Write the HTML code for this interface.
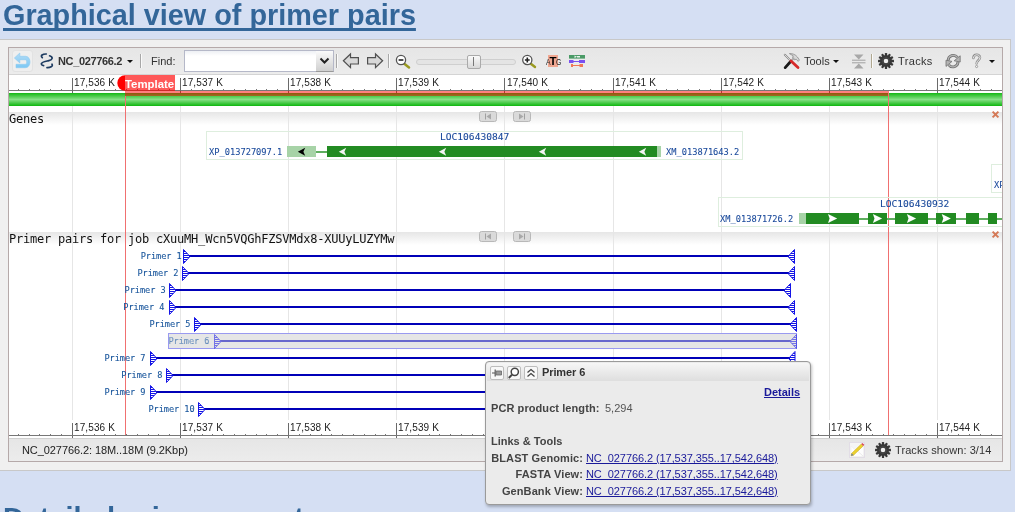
<!DOCTYPE html>
<html><head><meta charset="utf-8">
<style>
html,body{margin:0;padding:0}
body{width:1015px;height:512px;overflow:hidden;background:#d5dff3;position:relative;font-family:"Liberation Sans",sans-serif;font-size:11px;color:#222}
.abs{position:absolute}
h2{position:absolute;margin:0;left:3px;top:-1px;font:bold 28.8px/33px "Liberation Sans",sans-serif;color:#336699;text-decoration:underline;text-decoration-thickness:3px;text-underline-offset:3px;text-decoration-skip-ink:none;white-space:nowrap}
#h2b{top:502px}
#outer{left:0;top:39px;width:1011px;height:432px;background:#f0f0f0;border-top:1px solid #c8c8c8;border-bottom:1px solid #c8c8c8;border-right:1px solid #c8c8c8;box-sizing:border-box}
#panel{left:8px;top:47px;width:995px;height:415px;box-sizing:border-box;border:1px solid #b5a9a9;background:#fff}
#tb{left:9px;top:48px;width:993px;height:27px;box-sizing:border-box;border-bottom:1px solid #d4d4d4;background:linear-gradient(#e6e6e6,#ececec)}
#sb{left:9px;top:438px;width:993px;height:23px;background:linear-gradient(#e6e6e6,#ececec);border-top:1px solid #d0d0d0;box-sizing:border-box}
.mono{font-family:"DejaVu Sans Mono","Liberation Mono",monospace}
.sep{top:54px;width:1px;height:14px;background:#a8a8a8;box-shadow:1px 0 0 #fafafa}
.rl{font:10px/12px "Liberation Sans",sans-serif;color:#222;white-space:nowrap;letter-spacing:0.12px}
.tl{font-size:12px;line-height:14px;letter-spacing:-0.22px;color:#111;white-space:nowrap}
.gl{font-size:8.6px;line-height:11px;color:#18489a;white-space:nowrap;transform-origin:0 0;transform:scaleX(1.012);-webkit-text-stroke:0.08px #18489a}
.loc{transform:scaleX(1.116)}
.pl{font-size:8.6px;line-height:11px;color:#14529a;white-space:nowrap;letter-spacing:-0.05px;-webkit-text-stroke:0.08px #14529a}
.tbtn{top:366px;width:14px;height:14px;box-sizing:border-box;border:1px solid #bdbdbd;border-radius:2px;background:#f8f8f8}
.lk{left:473px;width:110px;text-align:right;font-weight:bold;color:#444;letter-spacing:0.09px}
.lv{left:586px;color:#1a1a9a;text-decoration:underline;letter-spacing:-0.08px}
.t11{font-size:11px;line-height:13px;white-space:nowrap}
#wrap{position:absolute;left:0;top:0;width:1015px;height:512px;will-change:transform}
</style></head><body>
<div id="wrap">
<h2>Graphical view of primer pairs</h2>
<div id="outer" class="abs"></div>
<div id="panel" class="abs"></div>
<div id="tb" class="abs"></div>
<div id="sb" class="abs"></div>
<!--TOOLBAR-->
<!-- back button -->
<div class="abs" style="left:12px;top:50px;width:21px;height:22px;box-sizing:border-box;border:1px solid #e2e2e2;border-radius:3px;background:#efefef"></div>
<svg class="abs" style="left:12px;top:50px" width="21" height="22" viewBox="12 50 21 22">
<defs><linearGradient id="bg1" x1="0" y1="0" x2="0" y2="1"><stop offset="0" stop-color="#b4dcf6"/><stop offset="1" stop-color="#7cc8f4"/></linearGradient></defs>
<path d="M14.4 58 L19.8 53 V56.3 H25.5 C31.5 56.3 31.5 67.7 25.5 67.7 H16 V64.3 H25.2 C27.2 64.3 27.2 59.7 25.2 59.7 H19.8 V63 Z" fill="url(#bg1)" stroke="#8ccaf0" stroke-width="0.6" stroke-linejoin="round"/>
</svg>
<!-- sequence icon -->
<svg class="abs" style="left:39px;top:52px" width="16" height="18" viewBox="39 52 16 18">
<g fill="none" stroke="#1d3b60" stroke-width="1.7" stroke-linecap="round">
<path d="M42.3 57.6 C40 55.6 42.6 53.9 46.3 54"/>
<path d="M49.6 55.8 C53.4 57.2 52.8 59.6 48.8 60.6 C45 61.5 41.2 62 41.3 64 C41.4 65.1 42.5 65.5 43.6 65.7"/>
<path d="M52 64.2 C53.4 66.4 50 67.8 47 67.6"/>
</g>
</svg>
<div class="abs t11" style="left:58px;top:55px;font-weight:bold;color:#333;letter-spacing:-0.36px">NC_027766.2</div>
<div class="abs" style="left:127px;top:60px;width:0;height:0;border-left:3px solid transparent;border-right:3px solid transparent;border-top:3px solid #111"></div>
<div class="abs sep" style="left:140px"></div>
<div class="abs t11" style="left:151px;top:55px;color:#333">Find:</div>
<div class="abs" style="left:184px;top:50px;width:133px;height:22px;box-sizing:border-box;border:1px solid #b5b8c8;background:linear-gradient(#eef0f4,#fff 5px)"></div>
<div class="abs" style="left:316px;top:50px;width:18px;height:22px;box-sizing:border-box;border:1px solid #b5b8c8;border-left:none;border-bottom-color:#999;background:linear-gradient(#fafafa,#d0d0d0)"></div>
<svg class="abs" style="left:319px;top:57px" width="11" height="8" viewBox="0 0 11 8"><path d="M1.5 1.5 L5.5 5.5 L9.5 1.5" fill="none" stroke="#222" stroke-width="2"/></svg>
<div class="abs sep" style="left:336px"></div>
<!-- arrows -->
<svg class="abs" style="left:342px;top:52px" width="18" height="18" viewBox="0 0 18 18"><path d="M1.4 8.8 L8.5 2 V5.6 H16.4 V12 H8.5 V15.6 Z" fill="#d8d8d8" stroke="#505050" stroke-width="1.2" stroke-linejoin="miter"/></svg>
<svg class="abs" style="left:366px;top:52px" width="18" height="18" viewBox="0 0 18 18"><path d="M16.6 8.8 L9.5 2 V5.6 H1.6 V12 H9.5 V15.6 Z" fill="#d8d8d8" stroke="#505050" stroke-width="1.2" stroke-linejoin="miter"/></svg>
<div class="abs sep" style="left:388px"></div>
<!-- zoom out -->
<svg class="abs" style="left:395px;top:54px" width="16" height="15" viewBox="0 0 16 15">
<path d="M9 9.5 L14 13.5" stroke="#9a9a20" stroke-width="2.4" stroke-linecap="round"/>
<circle cx="6" cy="6" r="4.6" fill="#fff" stroke="#555" stroke-width="1.3"/>
<path d="M3.6 6 H8.4" stroke="#222" stroke-width="1.6"/>
</svg>
<div class="abs" style="left:416px;top:59px;width:100px;height:6px;box-sizing:border-box;border:1px solid #cfcfcf;border-radius:3px;background:#e4e4e4"></div>
<div class="abs" style="left:467px;top:55px;width:14px;height:14px;box-sizing:border-box;border:1px solid #aaa;border-radius:2px;background:linear-gradient(#fafafa,#d8d8d8)"></div>
<div class="abs" style="left:473px;top:57px;width:1px;height:9px;background:#777"></div>
<!-- zoom in -->
<svg class="abs" style="left:521px;top:54px" width="16" height="15" viewBox="0 0 16 15">
<path d="M9.5 9.5 L14 13" stroke="#9a9a20" stroke-width="2.4" stroke-linecap="round"/>
<circle cx="6.3" cy="6" r="4.6" fill="#fff" stroke="#555" stroke-width="1.3"/>
<path d="M3.9 6 H8.7 M6.3 3.6 V8.4" stroke="#222" stroke-width="1.6"/>
</svg>
<!-- ATG -->
<div class="abs" style="left:548px;top:55px;width:10px;height:12px;background:#f0a690"></div>
<div class="abs" style="left:545.6px;top:56.6px;font:8.6px/11px 'Liberation Sans',sans-serif;color:#222;transform:scaleX(0.8);transform-origin:0 0">A</div>
<div class="abs" style="left:549.4px;top:54.6px;font:bold 11.5px/13px 'Liberation Sans',sans-serif;color:#000">T</div>
<div class="abs" style="left:556px;top:56.6px;font:8.6px/11px 'Liberation Sans',sans-serif;color:#222;transform:scaleX(0.8);transform-origin:0 0">G</div>
<!-- tracks icon -->
<svg class="abs" style="left:569px;top:55px" width="16" height="12" viewBox="0 0 16 12">
<rect x="0" y="0" width="16" height="3.6" fill="#4a9a66"/><path d="M5.5 0.6 L8 1.8 L5.5 3 Z M8 1.1 h3 v1.4 h-3z" fill="#e8f4ec"/>
<rect x="0" y="5" width="16" height="3" fill="#7a50f0"/><rect x="4.5" y="5" width="5.5" height="1" fill="#ececec"/><rect x="4.5" y="7" width="5.5" height="1" fill="#ececec"/>
<rect x="2" y="9" width="12" height="3" fill="#f07858"/><rect x="4" y="9" width="6.5" height="1" fill="#ececec"/><rect x="4" y="11" width="6.5" height="1" fill="#ececec"/>
</svg>
<!-- tools -->
<svg class="abs" style="left:783px;top:53px" width="18" height="17" viewBox="0 0 18 17">
<path d="M6.4 0.6 C9 0.2 12.6 1.6 14.4 4 L16.4 7 L15.2 8.4 L13.2 6.2 L11.2 6.8 L9.6 5 L10.2 2.8 Z" fill="#d8d8d8" stroke="#8a8a8a" stroke-width="0.8" stroke-linejoin="round"/>
<path d="M10.6 5.4 L7.6 8.6" stroke="#aaa" stroke-width="2" stroke-linecap="round"/>
<path d="M7.4 8.8 L2.2 14.6" stroke="#1a1a1a" stroke-width="2.8" stroke-linecap="round"/>
<path d="M1.8 1.8 L7.6 7.6" stroke="#8a8a8a" stroke-width="2" stroke-linecap="round"/>
<path d="M1.8 1.8 L7.6 7.6" stroke="#e8e8e8" stroke-width="0.8" stroke-linecap="round"/>
<path d="M8 8 L15 14.6" stroke="#d62a2a" stroke-width="2.8" stroke-linecap="round"/>
</svg>
<div class="abs t11" style="left:804px;top:55px;color:#333">Tools</div>
<div class="abs" style="left:833px;top:60px;width:0;height:0;border-left:3px solid transparent;border-right:3px solid transparent;border-top:3px solid #111"></div>
<!-- collapse icon -->
<svg class="abs" style="left:852px;top:54px" width="14" height="15" viewBox="0 0 14 15">
<path d="M2 0.5 H11.5 L6.75 5.5 Z M2 14.5 H11.5 L6.75 9.5 Z" fill="#a8a8a8"/><path d="M0 6.2 H13.5 M0 8.8 H13.5" stroke="#999" stroke-width="0.9"/>
</svg>
<div class="abs sep" style="left:871px;background:#b0a890"></div>
<!-- gear -->
<svg class="abs" style="left:877px;top:52px" width="18" height="18" viewBox="-9 -9 18 18">
<g fill="#383838"><circle r="6.1"/><rect x="-1.15" y="-8" width="2.3" height="16" rx="0.5" transform="rotate(0)"/><rect x="-1.15" y="-8" width="2.3" height="16" rx="0.5" transform="rotate(30)"/><rect x="-1.15" y="-8" width="2.3" height="16" rx="0.5" transform="rotate(60)"/><rect x="-1.15" y="-8" width="2.3" height="16" rx="0.5" transform="rotate(90)"/><rect x="-1.15" y="-8" width="2.3" height="16" rx="0.5" transform="rotate(120)"/><rect x="-1.15" y="-8" width="2.3" height="16" rx="0.5" transform="rotate(150)"/></g>
<circle r="2.3" fill="#f0f0f0"/>
<circle r="3.4" fill="none" stroke="#555" stroke-width="0.6"/>
</svg>
<div class="abs t11" style="left:898px;top:55px;color:#333;letter-spacing:0.35px">Tracks</div>
<!-- refresh -->
<svg class="abs" style="left:945px;top:53px" width="16" height="16" viewBox="945 53 16 16">
<g fill="none" stroke-linecap="butt">
<path d="M948.2 60.6 C948 55.4 954.6 53.6 957.4 57.4" stroke="#707070" stroke-width="2.8"/>
<path d="M948.2 60.6 C948 55.4 954.6 53.6 957.4 57.4" stroke="#b4b4b4" stroke-width="1.2"/>
<path d="M958 61.6 C958.2 66.8 951.6 68.6 948.8 64.8" stroke="#707070" stroke-width="2.8"/>
<path d="M958 61.6 C958.2 66.8 951.6 68.6 948.8 64.8" stroke="#b4b4b4" stroke-width="1.2"/>
</g>
<path d="M954.2 60.8 L960.2 55.8 L960.2 62 Z" fill="#b4b4b4" stroke="#707070" stroke-width="0.8" stroke-linejoin="round"/>
<path d="M952 61.4 L946 60.2 L946 66.4 Z" fill="#b4b4b4" stroke="#707070" stroke-width="0.8" stroke-linejoin="round"/>
</svg>
<!-- help -->
<svg class="abs" style="left:971px;top:53px" width="11" height="16" viewBox="0 0 11 16">
<path d="M2.4 5 C2.4 0.8 9 0.8 9 4.6 C9 7.2 5.6 7.4 5.6 10.4" fill="none" stroke="#8a8a8a" stroke-width="2.4" stroke-linecap="round"/>
<path d="M2.4 5 C2.4 0.8 9 0.8 9 4.6 C9 7.2 5.6 7.4 5.6 10.4" fill="none" stroke="#f4f4f4" stroke-width="1" stroke-linecap="round"/>
<circle cx="5.6" cy="13.5" r="1.1" fill="#f4f4f4" stroke="#8a8a8a" stroke-width="0.8"/>
</svg>
<div class="abs" style="left:989px;top:60px;width:0;height:0;border-left:3px solid transparent;border-right:3px solid transparent;border-top:3px solid #111"></div>
<!--/TOOLBAR-->
<!--GRAPH-->
<svg class="abs" style="left:9px;top:75px" width="993" height="363" viewBox="9 75 993 363" shape-rendering="crispEdges">
<defs><linearGradient id="hg" x1="0" y1="0" x2="0" y2="1"><stop offset="0" stop-color="#e6e6e6"/><stop offset="1" stop-color="#ffffff"/></linearGradient><linearGradient id="gg" x1="0" y1="0" x2="0" y2="1"><stop offset="0" stop-color="#14b814"/><stop offset="0.5" stop-color="#88e088"/><stop offset="1" stop-color="#0eb60e"/></linearGradient><pattern id="hatch" width="2" height="2" patternUnits="userSpaceOnUse"><rect x="0" y="1" width="2" height="1" fill="#1414e6"/></pattern></defs>
<rect x="9" y="112" width="993" height="13" fill="url(#hg)"/>
<rect x="9" y="232" width="993" height="13" fill="url(#hg)"/>
<rect x="72" y="106" width="1" height="314" fill="#e6e6e6"/>
<rect x="180" y="106" width="1" height="314" fill="#e6e6e6"/>
<rect x="288" y="106" width="1" height="314" fill="#e6e6e6"/>
<rect x="396" y="106" width="1" height="314" fill="#e6e6e6"/>
<rect x="504" y="106" width="1" height="314" fill="#e6e6e6"/>
<rect x="613" y="106" width="1" height="314" fill="#e6e6e6"/>
<rect x="721" y="106" width="1" height="314" fill="#e6e6e6"/>
<rect x="829" y="106" width="1" height="314" fill="#e6e6e6"/>
<rect x="937" y="106" width="1" height="314" fill="#e6e6e6"/>
<rect x="9" y="93" width="993" height="13" fill="url(#gg)"/>
<rect x="9" y="90" width="993" height="1" fill="#777"/>
<rect x="18" y="89" width="1" height="1" fill="#777"/>
<rect x="18" y="434" width="1" height="1" fill="#777"/>
<rect x="29" y="89" width="1" height="1" fill="#777"/>
<rect x="29" y="434" width="1" height="1" fill="#777"/>
<rect x="39" y="89" width="1" height="1" fill="#777"/>
<rect x="39" y="434" width="1" height="1" fill="#777"/>
<rect x="50" y="89" width="1" height="1" fill="#777"/>
<rect x="50" y="434" width="1" height="1" fill="#777"/>
<rect x="61" y="89" width="1" height="1" fill="#777"/>
<rect x="61" y="434" width="1" height="1" fill="#777"/>
<rect x="83" y="89" width="1" height="1" fill="#777"/>
<rect x="83" y="434" width="1" height="1" fill="#777"/>
<rect x="94" y="89" width="1" height="1" fill="#777"/>
<rect x="94" y="434" width="1" height="1" fill="#777"/>
<rect x="104" y="89" width="1" height="1" fill="#777"/>
<rect x="104" y="434" width="1" height="1" fill="#777"/>
<rect x="115" y="89" width="1" height="1" fill="#777"/>
<rect x="115" y="434" width="1" height="1" fill="#777"/>
<rect x="126" y="89" width="1" height="1" fill="#777"/>
<rect x="126" y="434" width="1" height="1" fill="#777"/>
<rect x="137" y="89" width="1" height="1" fill="#777"/>
<rect x="137" y="434" width="1" height="1" fill="#777"/>
<rect x="148" y="89" width="1" height="1" fill="#777"/>
<rect x="148" y="434" width="1" height="1" fill="#777"/>
<rect x="158" y="89" width="1" height="1" fill="#777"/>
<rect x="158" y="434" width="1" height="1" fill="#777"/>
<rect x="169" y="89" width="1" height="1" fill="#777"/>
<rect x="169" y="434" width="1" height="1" fill="#777"/>
<rect x="191" y="89" width="1" height="1" fill="#777"/>
<rect x="191" y="434" width="1" height="1" fill="#777"/>
<rect x="202" y="89" width="1" height="1" fill="#777"/>
<rect x="202" y="434" width="1" height="1" fill="#777"/>
<rect x="212" y="89" width="1" height="1" fill="#777"/>
<rect x="212" y="434" width="1" height="1" fill="#777"/>
<rect x="223" y="89" width="1" height="1" fill="#777"/>
<rect x="223" y="434" width="1" height="1" fill="#777"/>
<rect x="234" y="89" width="1" height="1" fill="#777"/>
<rect x="234" y="434" width="1" height="1" fill="#777"/>
<rect x="245" y="89" width="1" height="1" fill="#777"/>
<rect x="245" y="434" width="1" height="1" fill="#777"/>
<rect x="256" y="89" width="1" height="1" fill="#777"/>
<rect x="256" y="434" width="1" height="1" fill="#777"/>
<rect x="266" y="89" width="1" height="1" fill="#777"/>
<rect x="266" y="434" width="1" height="1" fill="#777"/>
<rect x="277" y="89" width="1" height="1" fill="#777"/>
<rect x="277" y="434" width="1" height="1" fill="#777"/>
<rect x="299" y="89" width="1" height="1" fill="#777"/>
<rect x="299" y="434" width="1" height="1" fill="#777"/>
<rect x="310" y="89" width="1" height="1" fill="#777"/>
<rect x="310" y="434" width="1" height="1" fill="#777"/>
<rect x="321" y="89" width="1" height="1" fill="#777"/>
<rect x="321" y="434" width="1" height="1" fill="#777"/>
<rect x="331" y="89" width="1" height="1" fill="#777"/>
<rect x="331" y="434" width="1" height="1" fill="#777"/>
<rect x="342" y="89" width="1" height="1" fill="#777"/>
<rect x="342" y="434" width="1" height="1" fill="#777"/>
<rect x="353" y="89" width="1" height="1" fill="#777"/>
<rect x="353" y="434" width="1" height="1" fill="#777"/>
<rect x="364" y="89" width="1" height="1" fill="#777"/>
<rect x="364" y="434" width="1" height="1" fill="#777"/>
<rect x="375" y="89" width="1" height="1" fill="#777"/>
<rect x="375" y="434" width="1" height="1" fill="#777"/>
<rect x="385" y="89" width="1" height="1" fill="#777"/>
<rect x="385" y="434" width="1" height="1" fill="#777"/>
<rect x="407" y="89" width="1" height="1" fill="#777"/>
<rect x="407" y="434" width="1" height="1" fill="#777"/>
<rect x="418" y="89" width="1" height="1" fill="#777"/>
<rect x="418" y="434" width="1" height="1" fill="#777"/>
<rect x="429" y="89" width="1" height="1" fill="#777"/>
<rect x="429" y="434" width="1" height="1" fill="#777"/>
<rect x="439" y="89" width="1" height="1" fill="#777"/>
<rect x="439" y="434" width="1" height="1" fill="#777"/>
<rect x="450" y="89" width="1" height="1" fill="#777"/>
<rect x="450" y="434" width="1" height="1" fill="#777"/>
<rect x="461" y="89" width="1" height="1" fill="#777"/>
<rect x="461" y="434" width="1" height="1" fill="#777"/>
<rect x="472" y="89" width="1" height="1" fill="#777"/>
<rect x="472" y="434" width="1" height="1" fill="#777"/>
<rect x="483" y="89" width="1" height="1" fill="#777"/>
<rect x="483" y="434" width="1" height="1" fill="#777"/>
<rect x="493" y="89" width="1" height="1" fill="#777"/>
<rect x="493" y="434" width="1" height="1" fill="#777"/>
<rect x="515" y="89" width="1" height="1" fill="#777"/>
<rect x="515" y="434" width="1" height="1" fill="#777"/>
<rect x="526" y="89" width="1" height="1" fill="#777"/>
<rect x="526" y="434" width="1" height="1" fill="#777"/>
<rect x="537" y="89" width="1" height="1" fill="#777"/>
<rect x="537" y="434" width="1" height="1" fill="#777"/>
<rect x="548" y="89" width="1" height="1" fill="#777"/>
<rect x="548" y="434" width="1" height="1" fill="#777"/>
<rect x="558" y="89" width="1" height="1" fill="#777"/>
<rect x="558" y="434" width="1" height="1" fill="#777"/>
<rect x="569" y="89" width="1" height="1" fill="#777"/>
<rect x="569" y="434" width="1" height="1" fill="#777"/>
<rect x="580" y="89" width="1" height="1" fill="#777"/>
<rect x="580" y="434" width="1" height="1" fill="#777"/>
<rect x="591" y="89" width="1" height="1" fill="#777"/>
<rect x="591" y="434" width="1" height="1" fill="#777"/>
<rect x="602" y="89" width="1" height="1" fill="#777"/>
<rect x="602" y="434" width="1" height="1" fill="#777"/>
<rect x="623" y="89" width="1" height="1" fill="#777"/>
<rect x="623" y="434" width="1" height="1" fill="#777"/>
<rect x="634" y="89" width="1" height="1" fill="#777"/>
<rect x="634" y="434" width="1" height="1" fill="#777"/>
<rect x="645" y="89" width="1" height="1" fill="#777"/>
<rect x="645" y="434" width="1" height="1" fill="#777"/>
<rect x="656" y="89" width="1" height="1" fill="#777"/>
<rect x="656" y="434" width="1" height="1" fill="#777"/>
<rect x="666" y="89" width="1" height="1" fill="#777"/>
<rect x="666" y="434" width="1" height="1" fill="#777"/>
<rect x="677" y="89" width="1" height="1" fill="#777"/>
<rect x="677" y="434" width="1" height="1" fill="#777"/>
<rect x="688" y="89" width="1" height="1" fill="#777"/>
<rect x="688" y="434" width="1" height="1" fill="#777"/>
<rect x="699" y="89" width="1" height="1" fill="#777"/>
<rect x="699" y="434" width="1" height="1" fill="#777"/>
<rect x="710" y="89" width="1" height="1" fill="#777"/>
<rect x="710" y="434" width="1" height="1" fill="#777"/>
<rect x="731" y="89" width="1" height="1" fill="#777"/>
<rect x="731" y="434" width="1" height="1" fill="#777"/>
<rect x="742" y="89" width="1" height="1" fill="#777"/>
<rect x="742" y="434" width="1" height="1" fill="#777"/>
<rect x="753" y="89" width="1" height="1" fill="#777"/>
<rect x="753" y="434" width="1" height="1" fill="#777"/>
<rect x="764" y="89" width="1" height="1" fill="#777"/>
<rect x="764" y="434" width="1" height="1" fill="#777"/>
<rect x="775" y="89" width="1" height="1" fill="#777"/>
<rect x="775" y="434" width="1" height="1" fill="#777"/>
<rect x="785" y="89" width="1" height="1" fill="#777"/>
<rect x="785" y="434" width="1" height="1" fill="#777"/>
<rect x="796" y="89" width="1" height="1" fill="#777"/>
<rect x="796" y="434" width="1" height="1" fill="#777"/>
<rect x="807" y="89" width="1" height="1" fill="#777"/>
<rect x="807" y="434" width="1" height="1" fill="#777"/>
<rect x="818" y="89" width="1" height="1" fill="#777"/>
<rect x="818" y="434" width="1" height="1" fill="#777"/>
<rect x="839" y="89" width="1" height="1" fill="#777"/>
<rect x="839" y="434" width="1" height="1" fill="#777"/>
<rect x="850" y="89" width="1" height="1" fill="#777"/>
<rect x="850" y="434" width="1" height="1" fill="#777"/>
<rect x="861" y="89" width="1" height="1" fill="#777"/>
<rect x="861" y="434" width="1" height="1" fill="#777"/>
<rect x="872" y="89" width="1" height="1" fill="#777"/>
<rect x="872" y="434" width="1" height="1" fill="#777"/>
<rect x="883" y="89" width="1" height="1" fill="#777"/>
<rect x="883" y="434" width="1" height="1" fill="#777"/>
<rect x="893" y="89" width="1" height="1" fill="#777"/>
<rect x="893" y="434" width="1" height="1" fill="#777"/>
<rect x="904" y="89" width="1" height="1" fill="#777"/>
<rect x="904" y="434" width="1" height="1" fill="#777"/>
<rect x="915" y="89" width="1" height="1" fill="#777"/>
<rect x="915" y="434" width="1" height="1" fill="#777"/>
<rect x="926" y="89" width="1" height="1" fill="#777"/>
<rect x="926" y="434" width="1" height="1" fill="#777"/>
<rect x="948" y="89" width="1" height="1" fill="#777"/>
<rect x="948" y="434" width="1" height="1" fill="#777"/>
<rect x="958" y="89" width="1" height="1" fill="#777"/>
<rect x="958" y="434" width="1" height="1" fill="#777"/>
<rect x="969" y="89" width="1" height="1" fill="#777"/>
<rect x="969" y="434" width="1" height="1" fill="#777"/>
<rect x="980" y="89" width="1" height="1" fill="#777"/>
<rect x="980" y="434" width="1" height="1" fill="#777"/>
<rect x="991" y="89" width="1" height="1" fill="#777"/>
<rect x="991" y="434" width="1" height="1" fill="#777"/>
<rect x="72" y="78" width="1" height="15" fill="#6a6a6a"/>
<rect x="72" y="423" width="1" height="15" fill="#6a6a6a"/>
<rect x="180" y="78" width="1" height="15" fill="#6a6a6a"/>
<rect x="180" y="423" width="1" height="15" fill="#6a6a6a"/>
<rect x="288" y="78" width="1" height="15" fill="#6a6a6a"/>
<rect x="288" y="423" width="1" height="15" fill="#6a6a6a"/>
<rect x="396" y="78" width="1" height="15" fill="#6a6a6a"/>
<rect x="396" y="423" width="1" height="15" fill="#6a6a6a"/>
<rect x="504" y="78" width="1" height="15" fill="#6a6a6a"/>
<rect x="504" y="423" width="1" height="15" fill="#6a6a6a"/>
<rect x="613" y="78" width="1" height="15" fill="#6a6a6a"/>
<rect x="613" y="423" width="1" height="15" fill="#6a6a6a"/>
<rect x="721" y="78" width="1" height="15" fill="#6a6a6a"/>
<rect x="721" y="423" width="1" height="15" fill="#6a6a6a"/>
<rect x="829" y="78" width="1" height="15" fill="#6a6a6a"/>
<rect x="829" y="423" width="1" height="15" fill="#6a6a6a"/>
<rect x="937" y="78" width="1" height="15" fill="#6a6a6a"/>
<rect x="937" y="423" width="1" height="15" fill="#6a6a6a"/>
<rect x="9" y="435" width="993" height="1" fill="#777"/>
<rect x="125" y="91" width="764" height="5" fill="#ff0000" fill-opacity="0.5"/>
<rect x="125" y="96" width="1" height="339" fill="#f07070"/>
<rect x="888" y="93" width="1" height="342" fill="#f07070"/>
<path d="M125 75.3 A7.7 7.7 0 0 0 125 90.7 Z" fill="#ff0000" shape-rendering="auto"/>
<rect x="125" y="75" width="50" height="16" fill="#ff0000" fill-opacity="0.65"/>
</svg>
<div class="abs rl" style="left:74px;top:77px">17,536 K</div>
<div class="abs rl" style="left:74px;top:422px">17,536 K</div>
<div class="abs rl" style="left:182px;top:77px">17,537 K</div>
<div class="abs rl" style="left:182px;top:422px">17,537 K</div>
<div class="abs rl" style="left:290px;top:77px">17,538 K</div>
<div class="abs rl" style="left:290px;top:422px">17,538 K</div>
<div class="abs rl" style="left:398px;top:77px">17,539 K</div>
<div class="abs rl" style="left:398px;top:422px">17,539 K</div>
<div class="abs rl" style="left:507px;top:77px">17,540 K</div>
<div class="abs rl" style="left:507px;top:422px">17,540 K</div>
<div class="abs rl" style="left:615px;top:77px">17,541 K</div>
<div class="abs rl" style="left:615px;top:422px">17,541 K</div>
<div class="abs rl" style="left:723px;top:77px">17,542 K</div>
<div class="abs rl" style="left:723px;top:422px">17,542 K</div>
<div class="abs rl" style="left:831px;top:77px">17,543 K</div>
<div class="abs rl" style="left:831px;top:422px">17,543 K</div>
<div class="abs rl" style="left:939px;top:77px">17,544 K</div>
<div class="abs rl" style="left:939px;top:422px">17,544 K</div>
<div class="abs" style="left:125px;top:78.4px;font:bold 11.4px/13px 'Liberation Sans',sans-serif;color:#fff">Template</div>
<svg class="abs" style="left:9px;top:106px" width="993" height="318" viewBox="9 106 993 318">
<rect x="479.5" y="111.5" width="17" height="10" rx="2" fill="#dadada" stroke="#b8b8b8"/>
<path d="M485.5 113.5 v6" stroke="#a0a0a0" stroke-width="1"/><path d="M491 113.5 v6 l-4.5 -3 z" fill="#a8a8a8"/>
<rect x="513.5" y="111.5" width="17" height="10" rx="2" fill="#dadada" stroke="#b8b8b8"/>
<path d="M524.5 113.5 v6" stroke="#a0a0a0" stroke-width="1"/><path d="M519 113.5 v6 l4.5 -3 z" fill="#a8a8a8"/>
<path d="M992.6 111.6 l5.8 5.8 M998.4 111.6 l-5.8 5.8" stroke="#d57a58" stroke-width="2"/>
<rect x="479.5" y="231.5" width="17" height="10" rx="2" fill="#dadada" stroke="#b8b8b8"/>
<path d="M485.5 233.5 v6" stroke="#a0a0a0" stroke-width="1"/><path d="M491 233.5 v6 l-4.5 -3 z" fill="#a8a8a8"/>
<rect x="513.5" y="231.5" width="17" height="10" rx="2" fill="#dadada" stroke="#b8b8b8"/>
<path d="M524.5 233.5 v6" stroke="#a0a0a0" stroke-width="1"/><path d="M519 233.5 v6 l4.5 -3 z" fill="#a8a8a8"/>
<path d="M992.6 231.6 l5.8 5.8 M998.4 231.6 l-5.8 5.8" stroke="#d57a58" stroke-width="2"/>
<g shape-rendering="crispEdges">
<rect x="206.5" y="131.5" width="536" height="28" fill="none" stroke="#deeede"/>
<rect x="287" y="146" width="29" height="11" fill="#a7d3a7"/>
<rect x="316" y="151" width="12" height="2" fill="#5fae5f"/>
<rect x="327" y="146" width="330" height="11" fill="#228b22"/>
<rect x="657" y="146" width="4" height="11" fill="#a7d3a7"/>
<path d="M1002 197.5 H718.5 V226.5 H1002" fill="none" stroke="#deeede"/>
<rect x="805" y="217.5" width="197" height="2" fill="#5fae5f"/>
<rect x="799" y="213" width="7" height="11" fill="#a7d3a7"/>
<rect x="806" y="213" width="53" height="11" fill="#228b22"/>
<rect x="868" y="213" width="19" height="11" fill="#228b22"/>
<rect x="895" y="213" width="33" height="11" fill="#228b22"/>
<rect x="936" y="213" width="20" height="11" fill="#228b22"/>
<rect x="966" y="213" width="13" height="11" fill="#228b22"/>
<rect x="988" y="213" width="9" height="11" fill="#228b22"/>
<path d="M1002 164.5 H991.5 V192.5 H1002" fill="none" stroke="#deeede"/>
</g>
<path d="M297.8 151.8 L305.2 147.8 L303.4 151.8 L305.2 155.8 Z" fill="#000"/>
<path d="M338.8 151.8 L346.2 147.8 L344.4 151.8 L346.2 155.8 Z" fill="#f4f4f4"/>
<path d="M438.8 151.8 L446.2 147.8 L444.4 151.8 L446.2 155.8 Z" fill="#f4f4f4"/>
<path d="M538.8 151.8 L546.2 147.8 L544.4 151.8 L546.2 155.8 Z" fill="#f4f4f4"/>
<path d="M638.8 151.8 L646.2 147.8 L644.4 151.8 L646.2 155.8 Z" fill="#f4f4f4"/>
<path d="M837.2 218.5 L828.0 213.9 L829.6 218.5 L828.0 223.1 Z" fill="#fff"/>
<path d="M882.1 218.5 L872.9 213.9 L874.5 218.5 L872.9 223.1 Z" fill="#fff"/>
<path d="M916.1 218.5 L906.9 213.9 L908.5 218.5 L906.9 223.1 Z" fill="#fff"/>
<path d="M950.9 218.5 L941.6999999999999 213.9 L943.3 218.5 L941.6999999999999 223.1 Z" fill="#fff"/>
<rect x="168.5" y="333.5" width="628" height="15" fill="#e6e6e6" stroke="#9a9af0" shape-rendering="crispEdges"/>
<g>
<rect x="189" y="255" width="600" height="2" fill="#0000b8" shape-rendering="crispEdges"/>
<path d="M183.5 249.5 L190 256.5 L183.5 263.5 Z" fill="url(#hatch)" stroke="#1414e6" stroke-width="1"/>
<path d="M794.5 249.5 L788 256.5 L794.5 263.5 Z" fill="url(#hatch)" stroke="#1414e6" stroke-width="1"/>
</g>
<g>
<rect x="188" y="272" width="601" height="2" fill="#0000b8" shape-rendering="crispEdges"/>
<path d="M182.5 266.5 L189 273.5 L182.5 280.5 Z" fill="url(#hatch)" stroke="#1414e6" stroke-width="1"/>
<path d="M794.5 266.5 L788 273.5 L794.5 280.5 Z" fill="url(#hatch)" stroke="#1414e6" stroke-width="1"/>
</g>
<g>
<rect x="175" y="289" width="610" height="2" fill="#0000b8" shape-rendering="crispEdges"/>
<path d="M169.5 283.5 L176 290.5 L169.5 297.5 Z" fill="url(#hatch)" stroke="#1414e6" stroke-width="1"/>
<path d="M790.5 283.5 L784 290.5 L790.5 297.5 Z" fill="url(#hatch)" stroke="#1414e6" stroke-width="1"/>
</g>
<g>
<rect x="175" y="306" width="614" height="2" fill="#0000b8" shape-rendering="crispEdges"/>
<path d="M169.5 300.5 L176 307.5 L169.5 314.5 Z" fill="url(#hatch)" stroke="#1414e6" stroke-width="1"/>
<path d="M794.5 300.5 L788 307.5 L794.5 314.5 Z" fill="url(#hatch)" stroke="#1414e6" stroke-width="1"/>
</g>
<g>
<rect x="200" y="323" width="591" height="2" fill="#0000b8" shape-rendering="crispEdges"/>
<path d="M194.5 317.5 L201 324.5 L194.5 331.5 Z" fill="url(#hatch)" stroke="#1414e6" stroke-width="1"/>
<path d="M796.5 317.5 L790 324.5 L796.5 331.5 Z" fill="url(#hatch)" stroke="#1414e6" stroke-width="1"/>
</g>
<g opacity="0.55">
<rect x="220" y="340" width="571" height="2" fill="#0000b8" shape-rendering="crispEdges"/>
<path d="M214.5 334.5 L221 341.5 L214.5 348.5 Z" fill="url(#hatch)" stroke="#1414e6" stroke-width="1"/>
<path d="M796.5 334.5 L790 341.5 L796.5 348.5 Z" fill="url(#hatch)" stroke="#1414e6" stroke-width="1"/>
</g>
<g>
<rect x="156" y="357" width="633.5" height="2" fill="#0000b8" shape-rendering="crispEdges"/>
<path d="M150.5 351.5 L157 358.5 L150.5 365.5 Z" fill="url(#hatch)" stroke="#1414e6" stroke-width="1"/>
<path d="M795.0 351.5 L788.5 358.5 L795.0 365.5 Z" fill="url(#hatch)" stroke="#1414e6" stroke-width="1"/>
</g>
<g>
<rect x="172" y="374" width="617" height="2" fill="#0000b8" shape-rendering="crispEdges"/>
<path d="M166.5 368.5 L173 375.5 L166.5 382.5 Z" fill="url(#hatch)" stroke="#1414e6" stroke-width="1"/>
<path d="M794.5 368.5 L788 375.5 L794.5 382.5 Z" fill="url(#hatch)" stroke="#1414e6" stroke-width="1"/>
</g>
<g>
<rect x="156" y="391" width="633" height="2" fill="#0000b8" shape-rendering="crispEdges"/>
<path d="M150.5 385.5 L157 392.5 L150.5 399.5 Z" fill="url(#hatch)" stroke="#1414e6" stroke-width="1"/>
<path d="M794.5 385.5 L788 392.5 L794.5 399.5 Z" fill="url(#hatch)" stroke="#1414e6" stroke-width="1"/>
</g>
<g>
<rect x="204" y="408" width="585" height="2" fill="#0000b8" shape-rendering="crispEdges"/>
<path d="M198.5 402.5 L205 409.5 L198.5 416.5 Z" fill="url(#hatch)" stroke="#1414e6" stroke-width="1"/>
<path d="M794.5 402.5 L788 409.5 L794.5 416.5 Z" fill="url(#hatch)" stroke="#1414e6" stroke-width="1"/>
</g>
</svg>
<div class="abs mono tl" style="left:9px;top:112px">Genes</div>
<div class="abs mono tl" style="left:9px;top:232px">Primer pairs for job cXuuMH_Wcn5VQGhFZSVMdx8-XUUyLUZYMw</div>
<div class="abs mono gl" style="left:208.5px;top:146.5px">XP_013727097.1</div>
<div class="abs mono gl" style="left:666px;top:146.5px">XM_013871643.2</div>
<div class="abs mono gl loc" style="left:440px;top:131.5px">LOC106430847</div>
<div class="abs mono gl" style="left:720px;top:213.5px">XM_013871726.2</div>
<div class="abs mono gl loc" style="left:880px;top:198.5px">LOC106430932</div>
<div class="abs mono gl" style="left:994px;top:180px;width:8px;overflow:hidden">XP_</div>
<div class="abs mono pl" style="left:140.7px;top:251px;">Primer 1</div>
<div class="abs mono pl" style="left:137.4px;top:268px;">Primer 2</div>
<div class="abs mono pl" style="left:124.6px;top:285px;">Primer 3</div>
<div class="abs mono pl" style="left:123.3px;top:302px;">Primer 4</div>
<div class="abs mono pl" style="left:149.4px;top:319px;">Primer 5</div>
<div class="abs mono pl" style="left:168.5px;top:336px;color:#7f9fc6;">Primer 6</div>
<div class="abs mono pl" style="left:104.5px;top:353px;">Primer 7</div>
<div class="abs mono pl" style="left:121.3px;top:370px;">Primer 8</div>
<div class="abs mono pl" style="left:104.5px;top:387px;">Primer 9</div>
<div class="abs mono pl" style="left:148.4px;top:404px;">Primer 10</div>
<!--/GRAPH-->
<!--STATUS-->
<div class="abs t11" style="left:22px;top:444px;color:#222;letter-spacing:-0.08px">NC_027766.2: 18M..18M (9.2Kbp)</div>
<!-- note/pencil icon -->
<svg class="abs" style="left:848px;top:441px" width="18" height="18" viewBox="848 441 18 18">
<rect x="849.5" y="442.5" width="15" height="15" fill="#f5f5f5" stroke="#e2dde6" stroke-width="1"/>
<path d="M851 446 L857 451.5 L863.5 446 V456.5 H851 Z" fill="#fdfdfd" stroke="#ececec" stroke-width="0.6"/>
<path d="M858 451.5 L863.5 456.5" stroke="#e4e4e4" stroke-width="0.8"/>
<path d="M861.3 444 L863.2 445.9 L853.6 455.2 L851 455.8 L851.7 453.3 Z" fill="#ecd030" stroke="#c9ae20" stroke-width="0.5"/>
<path d="M861.3 444 L862.4 442.9 L864.3 444.8 L863.2 445.9 Z" fill="#d84860"/>
<path d="M851 455.8 L851.7 453.3 L853.6 455.2 Z" fill="#7080a0"/>
</svg>
<svg class="abs" style="left:874px;top:441px" width="18" height="18" viewBox="-9 -9 18 18">
<g fill="#383838"><circle r="6.1"/><rect x="-1.15" y="-8" width="2.3" height="16" rx="0.5" transform="rotate(0)"/><rect x="-1.15" y="-8" width="2.3" height="16" rx="0.5" transform="rotate(30)"/><rect x="-1.15" y="-8" width="2.3" height="16" rx="0.5" transform="rotate(60)"/><rect x="-1.15" y="-8" width="2.3" height="16" rx="0.5" transform="rotate(90)"/><rect x="-1.15" y="-8" width="2.3" height="16" rx="0.5" transform="rotate(120)"/><rect x="-1.15" y="-8" width="2.3" height="16" rx="0.5" transform="rotate(150)"/></g>
<circle r="2.3" fill="#f0f0f0"/>
<circle r="3.4" fill="none" stroke="#555" stroke-width="0.6"/>
</svg>
<div class="abs t11" style="left:895px;top:444px;color:#333;letter-spacing:0.08px">Tracks shown: 3/14</div>
<!--/STATUS-->
<!--TOOLTIP-->
<div class="abs" id="tip" style="left:485px;top:361px;width:326px;height:144px;box-sizing:border-box;border:1px solid #9a9a9a;border-radius:4px;background:#ebebeb;box-shadow:1px 2px 3px rgba(0,0,0,0.25)"></div>
<div class="abs" style="left:487px;top:363px;width:322px;height:18px;background:linear-gradient(#f6f6f6,#dedede);border-radius:2px 2px 0 0"></div>
<div class="abs tbtn" style="left:490px"></div><div class="abs tbtn" style="left:507px"></div><div class="abs tbtn" style="left:524px"></div>
<svg class="abs" style="left:490px;top:366px" width="14" height="14" viewBox="0 0 14 14"><path d="M2 7 H5 M5.2 3.5 V10.5" fill="none" stroke="#555" stroke-width="1.2"/><path d="M6.2 5 H11.5 V9 H6.2 Z" fill="#999" stroke="#666" stroke-width="0.8"/></svg>
<svg class="abs" style="left:507px;top:366px" width="14" height="14" viewBox="0 0 14 14"><circle cx="7.8" cy="5.8" r="3.6" fill="#fff" stroke="#444" stroke-width="1.5"/><path d="M5 8.6 L1.8 12" stroke="#444" stroke-width="2"/></svg>
<svg class="abs" style="left:524px;top:366px" width="14" height="14" viewBox="0 0 14 14"><path d="M3.5 6.5 L7 3.5 L10.5 6.5 M3.5 10.5 L7 7.5 L10.5 10.5" fill="none" stroke="#444" stroke-width="1.3"/></svg>
<div class="abs t11" style="left:542px;top:366px;font-weight:bold;color:#333;letter-spacing:-0.1px">Primer 6</div>
<div class="abs t11" style="left:764px;top:386px;font-weight:bold;color:#1a1a9a;text-decoration:underline">Details</div>
<div class="abs t11" style="left:491px;top:402px;font-weight:bold;color:#444;letter-spacing:0.08px">PCR product length:</div>
<div class="abs t11" style="left:605px;top:402px;color:#555">5,294</div>
<div class="abs t11" style="left:491px;top:435px;font-weight:bold;color:#444">Links &amp; Tools</div>
<div class="abs t11 lk" style="top:452px">BLAST Genomic:</div><div class="abs t11 lv" style="top:452px">NC_027766.2 (17,537,355..17,542,648)</div>
<div class="abs t11 lk" style="top:468px">FASTA View:</div><div class="abs t11 lv" style="top:468px">NC_027766.2 (17,537,355..17,542,648)</div>
<div class="abs t11 lk" style="top:485px">GenBank View:</div><div class="abs t11 lv" style="top:485px">NC_027766.2 (17,537,355..17,542,648)</div>
<!--/TOOLTIP-->
<h2 id="h2b">Detailed primer reports</h2>
</div>
</body></html>
